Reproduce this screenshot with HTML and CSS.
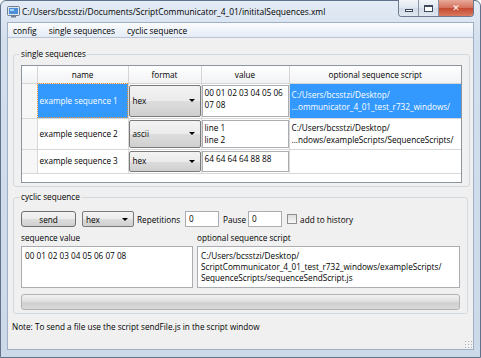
FILE: index.html
```html
<!DOCTYPE html>
<html lang="en">
<head>
  <meta charset="UTF-8" />
  <title>ScriptCommunicator - sequences</title>
  <link rel="stylesheet" href="styles.css">
</head>
<body>
  <div class="window">
    <div class="titlebar">
      <svg class="app-icon" width="13" height="13" viewBox="0 0 13 13">
        <rect x="0.5" y="1.5" width="12" height="9" rx="1" fill="#dfe6ee" stroke="#6f7f92"/>
        <rect x="2" y="3" width="9" height="6" fill="#4d8fd6"/>
        <rect x="3" y="4" width="4" height="2" fill="#a9d0f5"/>
        <rect x="4" y="11" width="5" height="1.5" fill="#6f7f92"/>
      </svg>
      <span class="title">C:/Users/bcsstzi/Documents/ScriptCommunicator_4_01/inititalSequences.xml</span>
      <div class="caption">
        <div class="cap-btn min"><span></span></div>
        <div class="cap-btn max"><span></span></div>
        <div class="cap-btn close">&#x2715;</div>
      </div>
    </div>

    <div class="client">
      <div class="menubar">
        <span>config</span>
        <span>single sequences</span>
        <span>cyclic sequence</span>
      </div>

      <div class="content">
        <fieldset class="group single">
          <legend>single sequences</legend>
          <div class="grid-box">
            <table class="grid">
              <colgroup>
                <col class="c-head"><col class="c-name"><col class="c-fmt"><col class="c-val"><col class="c-script">
              </colgroup>
              <thead>
                <tr><th></th><th>name</th><th>format</th><th>value</th><th>optional sequence script</th></tr>
              </thead>
              <tbody>
                <tr class="row1">
                  <td class="rowhead"></td>
                  <td class="name selected focus">example sequence 1</td>
                  <td class="fmt"><div class="combo">hex</div></td>
                  <td class="val"><div class="edit">00 01 02 03 04 05 06<br>07 08</div></td>
                  <td class="script selected">C:/Users/bcsstzi/Desktop/<br>...ommunicator_4_01_test_r732_windows/</td>
                </tr>
                <tr class="row2">
                  <td class="rowhead"></td>
                  <td class="name">example sequence 2</td>
                  <td class="fmt"><div class="combo">ascii</div></td>
                  <td class="val"><div class="edit">line 1<br>line 2</div></td>
                  <td class="script">C:/Users/bcsstzi/Desktop/<br>...ndows/exampleScripts/SequenceScripts/</td>
                </tr>
                <tr class="row3">
                  <td class="rowhead"></td>
                  <td class="name">example sequence 3</td>
                  <td class="fmt"><div class="combo">hex</div></td>
                  <td class="val"><div class="edit">64 64 64 64 88 88</div></td>
                  <td class="script"></td>
                </tr>
              </tbody>
            </table>
          </div>
        </fieldset>

        <fieldset class="group cyclic">
          <legend>cyclic sequence</legend>
          <div class="controls">
            <div class="button send">send</div>
            <div class="combo small">hex</div>
            <span class="lbl rep">Repetitions</span>
            <div class="line-edit">0</div>
            <span class="lbl pause">Pause</span>
            <div class="line-edit">0</div>
            <div class="checkbox"></div>
            <span class="lbl">add to history</span>
          </div>
          <div class="script-row">
            <span class="lbl">sequence value</span>
            <span class="lbl">optional sequence script</span>
            <div class="text-edit">00 01 02 03 04 05 06 07 08</div>
            <div class="text-edit">C:/Users/bcsstzi/Desktop/<br>ScriptCommunicator_4_01_test_r732_windows/exampleScripts/<br>SequenceScripts/sequenceSendScript.js</div>
          </div>
          <div class="progress"></div>
        </fieldset>

        <p class="note">Note: To send a file use the script sendFile.js in the script window</p>
      </div>
      <div class="grip"></div>
    </div>
  </div>
</body>
</html>
```

FILE: styles.css
```css
* {
  box-sizing: border-box;
}

body {
  margin: 0;
  font-family: "Open Sans", "Liberation Sans", sans-serif;
  font-size: 8.2px;
  color: #000;
  background: #fff;
}

.window {
  width: 481px;
  height: 358px;
  display: flex;
  flex-direction: column;
  padding: 0 6px 7px;
  border: 1px solid #62728a;
  border-radius: 6px 6px 0 0;
  background: linear-gradient(#e3ebf5, #d3dfed 40px, #ccd9e9);
}

/* title bar */
.titlebar {
  height: 21px;
  display: flex;
  align-items: center;
}

.app-icon {
  flex: none;
}

.title {
  margin-left: 2px;
  font-size: 8.45px;
  color: #000;
}

.caption {
  margin-left: auto;
  align-self: flex-start;
  margin-top: -1px;
  display: flex;
  height: 17px;
  border: 1px solid #6d7b8d;
  border-top: none;
  border-radius: 0 0 4px 4px;
  overflow: hidden;
}

.cap-btn {
  width: 20px;
  display: flex;
  align-items: center;
  justify-content: center;
  background: linear-gradient(#f3f6fa, #dfe6ef 50%, #d2dbe7 51%, #e0e7f0);
  border-right: 1px solid #8a97a8;
}

.cap-btn.min span {
  width: 8px;
  height: 3px;
  margin-top: 4px;
  border: 1px solid #3c4a5c;
  background: #fff;
}

.cap-btn.max span {
  width: 9px;
  height: 7px;
  border: 1px solid #3c4a5c;
  border-top-width: 2px;
  background: #fff;
}

.cap-btn.close {
  width: 34px;
  border-right: none;
  color: #fff;
  font-family: "DejaVu Sans", sans-serif;
  font-size: 9px;
  font-weight: bold;
  background: linear-gradient(#e9a99a, #d4715b 50%, #c44a30 51%, #d9785e);
}

/* client area */
.client {
  flex: 1;
  display: flex;
  flex-direction: column;
  border: 1px solid #9fb0c6;
  background: #f0f0f0;
}

.menubar {
  height: 15px;
  display: flex;
  align-items: center;
  gap: 12px;
  padding-left: 5px;
  font-size: 8.4px;
  background: linear-gradient(#fbfcfe, #e4ebf5);
  border-bottom: 1px solid #b9c5d6;
}

.content {
  padding: 0 5px;
}

/* group boxes */
.group {
  margin: 10px 0 0;
  padding: 5px 7px 3px;
  border: 1px solid #d2dae0;
  border-radius: 3px;
}

.group.cyclic {
  margin-top: 4px;
}

.group legend {
  margin-left: -1px;
  padding: 0 1px;
  line-height: 12px;
}

.grid-box {
  height: 118px;
  border: 1px solid #8f959c;
  background: #fff;
}

.grid {
  width: 439px;
  table-layout: fixed;
  border-collapse: collapse;
}

.c-head { width: 15px; }
.c-name { width: 91px; }
.c-fmt { width: 73px; }
.c-val { width: 88px; }
.c-script { width: 172px; }

.grid th {
  height: 17px;
  padding: 0;
  font-weight: normal;
  background: linear-gradient(#ffffff, #f1f2f4);
  border-right: 1px solid #d5d5d5;
  border-bottom: 1px solid #d5d5d5;
}

.grid td {
  padding: 0 2px;
  border-right: 1px solid #d8d8d8;
  border-bottom: 1px solid #d8d8d8;
  line-height: 12px;
  white-space: nowrap;
  overflow: hidden;
}

.grid th:last-child,
.grid td:last-child {
  border-right: none;
}

.row1 td { height: 35px; }
.row2 td { height: 31px; }
.row3 td { height: 24px; }

.grid td.rowhead {
  background: #f7f7f7;
}

.grid td.fmt,
.grid td.val {
  padding: 1px 0;
}

.selected {
  background: #3399ff;
  color: #fff;
}

.focus {
  outline: 1px dotted #e8953a;
  outline-offset: -1px;
}

.combo {
  height: 100%;
  display: flex;
  align-items: center;
  padding-left: 3px;
  border: 1px solid #7a7a7a;
  border-radius: 2px;
  background: linear-gradient(#f3f3f3, #ebebeb 50%, #dddddd 51%, #cfcfcf);
}

.combo::after {
  content: "";
  margin-left: auto;
  margin-right: 5px;
  border-left: 3px solid transparent;
  border-right: 3px solid transparent;
  border-top: 3px solid #000;
}

.edit {
  height: 100%;
  padding: 1px 2px;
  border: 1px solid #abadb3;
  background: #fff;
  line-height: 12px;
}

/* cyclic group */
.controls {
  display: flex;
  align-items: center;
  height: 16px;
  margin-top: 3px;
}

.button {
  height: 16px;
  display: flex;
  align-items: center;
  justify-content: center;
  border: 1px solid #707070;
  border-radius: 3px;
  background: linear-gradient(#f3f3f3, #ebebeb 50%, #dddddd 51%, #cfcfcf);
}

.send {
  width: 55px;
  margin-right: 6px;
}

.combo.small {
  width: 52px;
  height: 16px;
  margin-right: 3px;
}

.lbl.rep {
  margin-right: 5px;
}

.lbl.pause {
  margin: 0 2px 0 4px;
}

.line-edit {
  width: 34px;
  height: 16px;
  padding-left: 3px;
  line-height: 14px;
  border: 1px solid #abadb3;
  background: #fff;
}

.checkbox {
  width: 10px;
  height: 10px;
  margin: 0 3px 0 5px;
  border: 1px solid #8e8f8f;
  background: linear-gradient(#dedede, #f7f7f7);
}

.script-row {
  display: grid;
  grid-template-columns: 172px 1fr;
  column-gap: 4px;
  margin-top: 5px;
}

.script-row .lbl {
  line-height: 12px;
  margin-bottom: 2px;
}

.text-edit {
  height: 42px;
  padding: 3px 3px;
  line-height: 11px;
  border: 1px solid #abadb3;
  background: #fff;
  white-space: nowrap;
  overflow: hidden;
}

.progress {
  height: 16px;
  margin-top: 6px;
  border: 1px solid #b2b2b2;
  border-radius: 3px;
  background: linear-gradient(#f2f2f2, #e2e2e2 40%, #cfcfcf 60%, #dadada);
}

.note {
  margin: 7px 0 0 -1px;
  line-height: 12px;
}

.grip {
  margin-top: auto;
  align-self: flex-end;
  width: 8px;
  height: 8px;
  margin-right: 1px;
  margin-bottom: 1px;
  background: radial-gradient(circle, #a8b0ba 0.8px, transparent 1px) 0 0 / 3px 3px;
}
```
